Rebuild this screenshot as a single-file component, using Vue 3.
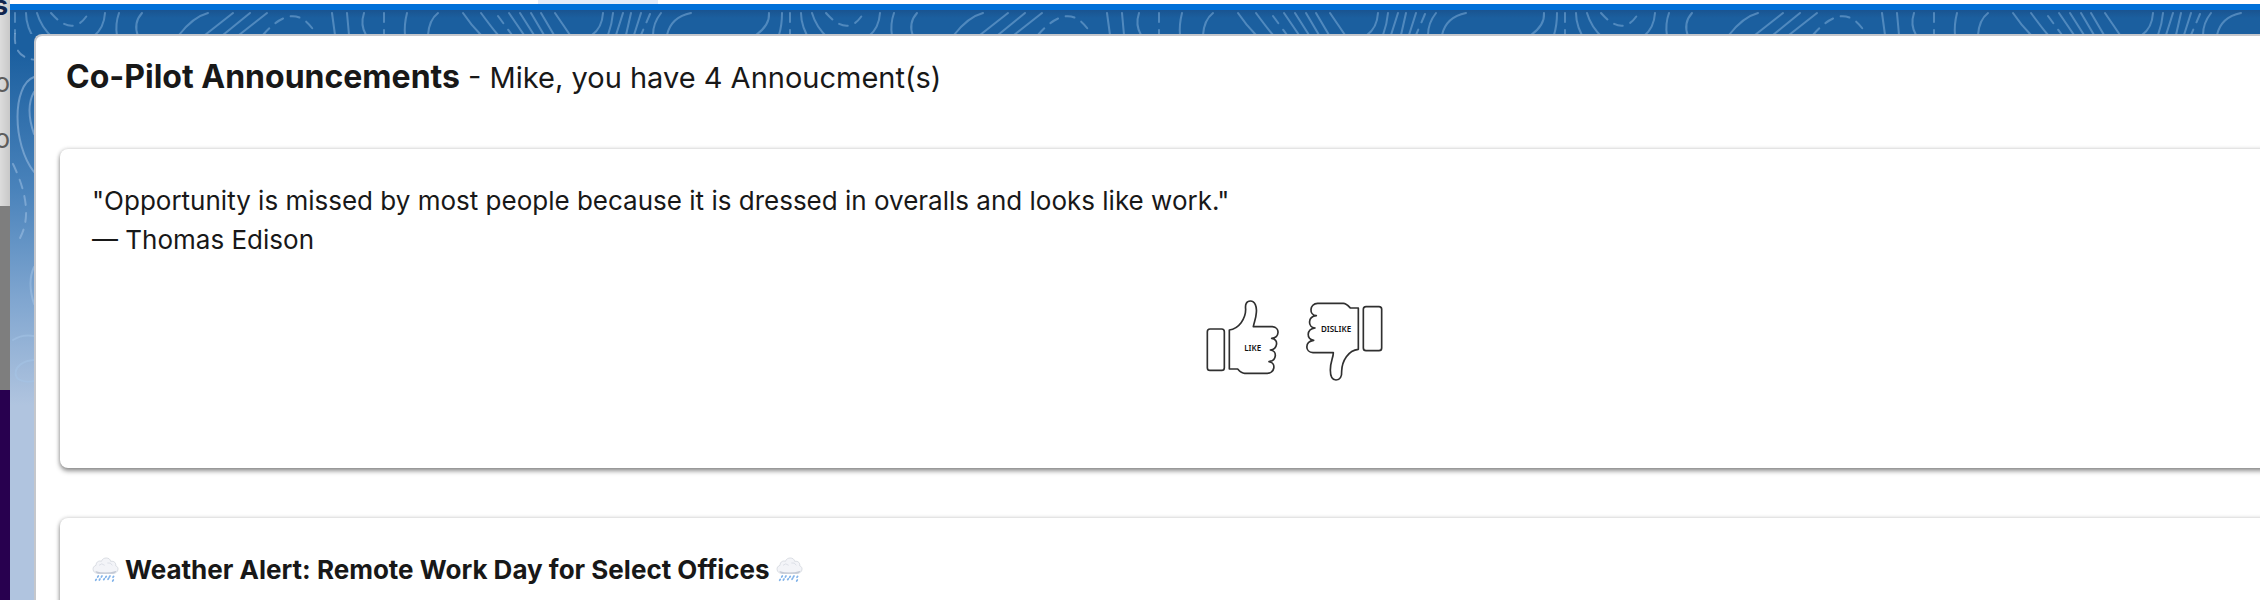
<script setup>
const firstName = 'Mike'
const announcementCount = 4
const quote = {
  text: '"Opportunity is missed by most people because it is dressed in overalls and looks like work."',
  author: '— Thomas Edison',
}
const alertTitle = 'Weather Alert: Remote Work Day for Select Offices'
</script>

<template>
  <div class="page">
    <aside class="rail">
      <div class="rail-text">
        <span class="rail-heading">s</span>
        <span class="rail-line">o</span>
        <span class="rail-line">o</span>
      </div>
      <div class="rail-grey"></div>
      <div class="rail-purple"></div>
    </aside>

    <div class="workspace">
      <div class="tab-strip"><div class="tab"></div></div>
      <div class="brand-bar"></div>
      <div class="backdrop">
        <svg class="contours" aria-hidden="true">
          <defs>
            <pattern id="contour" width="775" height="400" patternUnits="userSpaceOnUse">
              <g fill="none" stroke="#86b3dd" stroke-opacity=".5" stroke-width="2" stroke-linecap="round">
                <path d="M16 3Q16 17 26 32M27 3Q31 17 43 28M95 3Q94 18 84 26M109 3Q105 14 107 26M132 3Q123 13 128 26" />
                <path d="M198 3Q183 7 169 25M223 3L195 25M240 3L213 25M257 3L229 25" />
                <path d="M322 3L325 25M337 3L339 25M354 3Q350 15 356 25M397 3Q394 15 395 25M428 3Q419 10 418 25" />
                <path d="M453 3Q461 15 471 25M471 3Q482 18 488 25M499 3L514 25M510 3L524 25M521 3L534 25M531 3L544 25M545 3L560 25" />
                <path d="M593 3Q592 18 582 25M603 3Q602 14 598 25M613 3L606 25M621 3L616 25M631 3L624 25M651 3Q643 13 643 25M681 3Q661 7 657 25M759 3Q760 15 746 25M772 3Q772 15 769 25" />
                <path stroke-dasharray="9 8" d="M41 3Q63 28 78 4M253 25Q285-12 306 24M374 3V25M488 6L502 25M640 4L631 25M5 3V25" />
              </g>
            </pattern>
          </defs>
          <rect width="100%" height="24" fill="url(#contour)" />
          <g fill="none" stroke="#a5c6e8" stroke-opacity=".5" stroke-width="2" stroke-linecap="round">
            <path d="M24 67C2 75 2 134 24 162M24 82Q15 98 24 124M24 257Q17 272 24 294M3 330Q12 324 24 326M24 350C1 351-2 376 24 371" />
            <path stroke-dasharray="9 8" d="M5 24Q3 48 26 50M3 154Q25 200 10 228" />
          </g>
        </svg>

        <main class="panel">
          <header class="panel-header">
            <h1><strong>Co-Pilot Announcements</strong> - {{ firstName }}, you have {{ announcementCount }} Annoucment(s)</h1>
          </header>

          <article class="card">
            <p>{{ quote.text }}<br />{{ quote.author }}</p>
            <div class="reactions">
              <button type="button" aria-label="Like">
                <svg width="74" height="83" viewBox="78 60 222 249" aria-hidden="true">
                  <g fill="none" stroke="#303030" stroke-width="5" stroke-linejoin="round">
                    <rect x="82" y="150" width="51" height="124" rx="8" />
                    <path d="M148 153C177 149 197 119 197 91C195 76 199 66 211 66C225 66 231 83 229 101C228 119 222 131 220 143H277C301 145 299 176 275 178C298 181 292 211 271 213C293 216 290 245 267 248C290 252 284 283 262 283H194C184 283 180 278 173 270H148Z" />
                  </g>
                  <text x="218" y="217" class="label">LIKE</text>
                </svg>
              </button>
              <button type="button" aria-label="Dislike">
                <svg width="79" height="83" viewBox="375 60 237 249" aria-hidden="true">
                  <g fill="none" stroke="#303030" stroke-width="5" stroke-linejoin="round">
                    <rect x="550" y="83" width="55" height="132" rx="8" />
                    <path d="M535 87H511C503 78 499 73 490 73H413C388 74 386 108 409 110C382 113 383 145 405 147C378 151 379 181 401 184C373 188 375 220 399 221H460C460 236 451 248 451 273C451 294 457 303 468 303C480 303 486 293 485 276C486 245 505 214 535 211Z" />
                  </g>
                  <text x="468" y="158" class="label">DISLIKE</text>
                </svg>
              </button>
            </div>
          </article>

          <article class="card">
            <h2>
              <svg v-for="side in 2" :key="side" :class="['cloud', { last: side === 2 }]" width="27" height="26" viewBox="36 36 81 78" aria-hidden="true">
                <path d="M53 85C37 85 34 65 48 61C48 49 59 46 64 49C69 35 90 36 92 49C103 47 109 55 107 62C119 67 115 84 101 85Z" fill="#f3f4f8" stroke="#ccd0d8" stroke-width="2" />
                <path d="M46 78Q76 88 110 77Q106 86 99 86H54Q48 85 46 78Z" fill="#c3c9d5" />
                <path d="M57 61Q65 52 74 61M82 54Q92 51 97 61" fill="none" stroke="#dde0e8" stroke-width="3" />
                <path d="M55 93L53 96M66 93L64 96M79 94L77 97M90 93L88 96M101 94L99 97M49 103L47 106M60 102L58 105M73 101L71 104M86 100L84 103M100 105L98 108" fill="none" stroke="#82b3e9" stroke-width="5" stroke-linecap="round" />
              </svg>
              <span>{{ alertTitle }}</span>
            </h2>
          </article>
        </main>
      </div>
    </div>
  </div>
</template>

<style>
body {
  margin: 0;
}
</style>

<style scoped>
.page {
  display: flex;
  height: 100vh;
  overflow: hidden;
  background: #fff;
  color: #181818;
  font-family: Inter, "Liberation Sans", sans-serif;
}
.rail {
  display: flex;
  flex: none;
  flex-direction: column;
  width: 10px;
  overflow: hidden;
  box-shadow: inset -1px 0 #999;
}
.rail-text {
  display: flex;
  flex: none;
  flex-direction: column;
  align-items: flex-end;
  height: 206px;
  background: linear-gradient(90deg, #dcdcdc, #c8c8c8);
  font-size: 26px;
}
.rail-heading {
  height: 55px;
  padding-right: 2px;
  color: #10244e;
  font-weight: 700;
  line-height: 12px;
}
.rail-line {
  color: #5c5c5c;
  line-height: 56px;
}
.rail-grey {
  flex: none;
  height: 184px;
  background: #7e7e7e;
}
.rail-purple {
  flex: 1;
  background: #28004f;
}
.workspace {
  display: flex;
  flex: 1;
  flex-direction: column;
  min-width: 0;
}
.tab-strip {
  flex: none;
  height: 4px;
  padding-left: 528px;
}
.tab {
  width: 120px;
  height: 4px;
  background: #e5ecf9;
}
.brand-bar {
  flex: none;
  height: 6px;
  background: #0070d8;
}
.backdrop {
  display: flex;
  flex: 1;
  position: relative;
  box-sizing: border-box;
  padding: 24px 0 0 24px;
  background: linear-gradient(#1a5490 0, #1b5f9f 8px, #1b5f9f 40px, #4a83bb 180px, #80a6d0 290px, #b0c4df 395px);
}
.contours {
  position: absolute;
  inset: 0;
  width: 100%;
  height: 100%;
}
.panel {
  flex: 1;
  position: relative;
  min-width: 0;
  padding-left: 24px;
  border: solid #c5c7cc;
  border-width: 2px 0 0 2px;
  border-radius: 8px 0 0 0;
  background: #fff;
}
.panel-header {
  padding: 22px 6px 51px;
}
h1 {
  margin: 0;
  font-size: 29px;
  font-weight: 400;
  line-height: 40px;
}
h1 strong {
  font-size: 32px;
  font-weight: 700;
  line-height: 32px;
}
.card {
  margin: 0 -270px 50px 0;
  padding: 32px;
  border-radius: 8px;
  background: #fff;
  box-shadow: 0 0 4px rgba(0, 0, 0, .18), 0 3px 5px rgba(0, 0, 0, .42);
}
p,
h2 {
  margin: 0;
  font-size: 26px;
  line-height: 39px;
}
h2 {
  display: flex;
  align-items: center;
  gap: 6px;
  font-weight: 700;
}
.cloud.last {
  order: 1;
}
.reactions {
  display: flex;
  justify-content: center;
  gap: 25px;
  padding: 40px 0 54px;
}
button {
  padding: 0;
  border: 0;
  background: none;
  cursor: pointer;
}
button svg {
  display: block;
}
.label {
  fill: #111;
  font-family: "Noto Sans", sans-serif;
  font-size: 24px;
  font-weight: 600;
  text-anchor: middle;
}
</style>
